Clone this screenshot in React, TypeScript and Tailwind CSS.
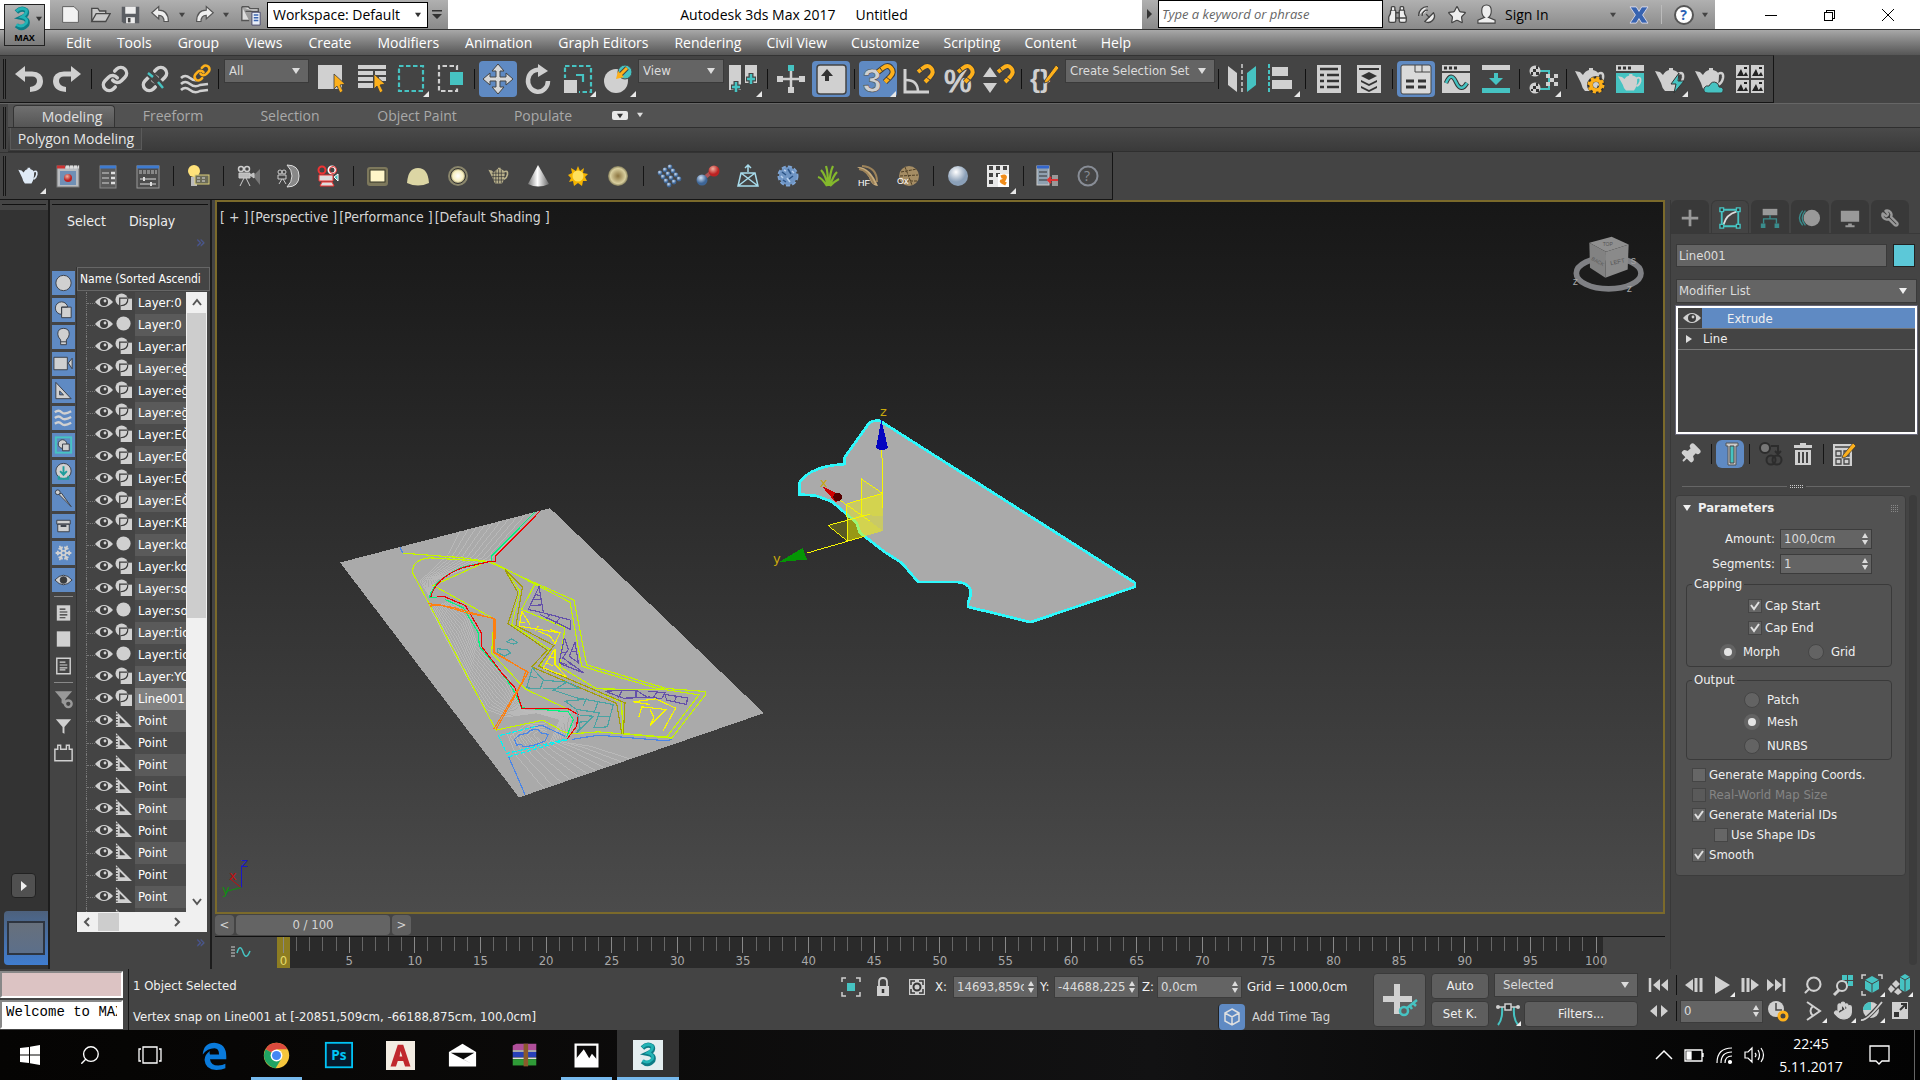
import type { ReactNode } from "react"
import { Link, Search, Star, Hand, Wrench, Snowflake, Pin, Binoculars, SatelliteDish } from "lucide-react"

const L = "#d0d0d0"
const T = "#46c3c2"
const O = "#fdb01b"
const D = "#444444"

/* ---------- shared bits ---------- */

interface ToolProps {
  label: string
  active?: boolean
  flyout?: boolean
  children: ReactNode
}

const Tool = ({ label, active, flyout, children }: ToolProps) => (
  <button aria-label={label} className="flex h-9 w-10 shrink-0 items-center justify-center">
    <svg viewBox="0 0 40 36" className="h-9 w-10 overflow-visible" fill="none">
      {active && <rect x="1" y="0" width="38" height="36" rx="4" fill="#5f8ac3" />}
      {children}
      {flyout && <path d="M38 30V36H32Z" fill="#e8e8e8" />}
    </svg>
  </button>
)

const Sep = () => (
  <div className="flex h-[26px] w-[7px] shrink-0 items-center justify-center">
    <div className="h-5 w-px bg-[#111]" />
  </div>
)

const WideSep = () => (
  <div className="flex h-[26px] w-[10px] shrink-0 items-center justify-center">
    <div className="h-5 w-px bg-[#151515]" />
  </div>
)

const Grip = () => (
  <div className="flex w-2 shrink-0 justify-center gap-px self-stretch py-[3px]">
    <div className="w-px bg-[#151515]" />
    <div className="w-px bg-[#151515]" />
  </div>
)

const Arrow = ({ className = "" }: { className?: string }) => (
  <svg viewBox="0 0 8 6" className={`pointer-events-none h-[6px] w-2 ${className}`}>
    <path d="M0 0H8L4 6Z" fill="currentColor" />
  </svg>
)

const Dropdown = ({ label, value, className = "" }: { label: string; value: string; className?: string }) => (
  <label className={`relative flex items-center border border-[#3a3a3a] bg-[#646464] text-[#dcdcdc] ${className}`}>
    <select aria-label={label} className="h-full w-full appearance-none bg-transparent pl-1 outline-none">
      <option>{value}</option>
    </select>
    <Arrow className="absolute right-2" />
  </label>
)

const Spin = ({ label, value, className = "" }: { label: string; value: string; className?: string }) => (
  <div className={`flex items-center border border-[#3c3c3c] bg-[#646464] pr-[3px] ${className}`}>
    <input aria-label={label} defaultValue={value} className="w-full min-w-0 flex-1 bg-transparent pl-[3px] text-[#dcdcdc] outline-none" />
    <svg viewBox="0 0 6 12" className="ml-1 h-3 w-[6px] shrink-0" fill="#dcdcdc">
      <path d="M3 0L6 5H0ZM3 12L6 7H0Z" />
    </svg>
  </div>
)

const EyeShape = () => (
  <svg viewBox="0 0 18 12" className="h-3 w-[18px] shrink-0">
    <path d="M0 6Q9 -4 18 6Q9 16 0 6Z" fill={L} />
    <circle cx="9" cy="6" r="4" fill="#3c3c3c" />
    <circle cx="10" cy="5" r="1.4" fill={L} />
  </svg>
)

const Hook = () => (
  <g strokeWidth="4">
    <path d="M20 11L25 7Q30 3 33 7Q37 11 32 16L27 21" stroke="#3d3d3d" strokeWidth="6" />
    <path d="M20 11L25 7Q30 3 33 7Q37 11 32 16L27 21" stroke={O} />
    <path d="M22 7L25 11M28 16L32 19" stroke="#3d3d3d" strokeWidth="1" />
  </g>
)

const Cursor = () => <path d="M23 13L34 23L29 24L32 30L29 32L26 25L23 28Z" fill={O} stroke="#3d3d3d" strokeWidth="0.8" />

const Teapot = ({ fill = L }: { fill?: string }) => (
  <g>
    <path d="M5 10L10 11L13 14Q15 10 19 9V7H23V9Q28 10 29 14Q29 25 25 30H15Q12 27 11 22Z" fill={fill} />
    <path d="M28 13Q34 10 33 17Q32 22 28 24" stroke={fill} strokeWidth="2.5" />
  </g>
)

/* ---------- title bar ---------- */

const ThreeLogo = ({ className }: { className: string }) => (
  <svg viewBox="0 0 40 40" className={className} fill="none">
    <path d="M12 10Q19 3 26 8Q29 14 20 18Q30 20 27 28Q20 36 12 29" stroke="#0e7c86" strokeWidth="7" />
    <path d="M12 9Q19 2 26 7Q28 12 20 17Q29 19 26 26Q20 33 12 28" stroke="#22b3b5" strokeWidth="4" />
  </svg>
)

const quick = [
  <path key="n" d="M3 3H16L21 8V21H3Z" fill="#f2f2f2" stroke="#555" />,
  <path key="o" d="M2 20V5H9L11 8H18V11M2 20L7 11H23L18 20Z" fill="#c9c9c9" stroke="#484848" strokeWidth="1.5" />,
  <g key="s"><path d="M2 3H22V22H4L2 20Z" fill="#5b5e63" /><path d="M6 3H18V11H6ZM7 15H17V22H7Z" fill="#eee" /><path d="M9 16H12V21H9Z" fill="#444" /></g>,
  <path key="u" d="M2 10L10 3V7Q21 7 21 20H16Q16 13 10 13V17Z" fill="#eee" stroke="#555" strokeWidth="1.3" />,
]

const TitleBar = () => (
  <div className="flex h-[29px] bg-white text-[14px] text-black">
    <div className="ml-[50px] flex w-[398px] items-center bg-linear-to-b from-[#b0b0b0] to-[#8a8a8a] pl-[5px]">
      {["New", "Open", "Save", "Undo"].map((name, i) => (
        <button key={name} aria-label={name} className="flex w-[30px] justify-center">
          <svg viewBox="0 0 24 24" className="size-[21px]" fill="none">{quick[i]}</svg>
        </button>
      ))}
      <Arrow className="ml-1 h-1 w-[6px] text-[#444]" />
      <button aria-label="Redo" className="ml-1 flex w-[30px] justify-center">
        <svg viewBox="0 0 24 24" className="size-[21px] -scale-x-100" fill="none">{quick[3]}</svg>
      </button>
      <Arrow className="ml-1 h-1 w-[6px] text-[#444]" />
      <button aria-label="Project folder" className="ml-[10px] flex w-6 justify-center">
        <svg viewBox="0 0 24 24" className="size-[22px]" fill="none">
          <path d="M2 3H9L11 5H20V10M2 3V18H10M6 8H20" stroke="#555" strokeWidth="1.5" fill="#ddd" />
          <path d="M13 9H22V23H13Z" fill="#e8eef8" stroke="#446" />
          <path d="M15 12H20M15 15H20M15 18H20" stroke="#3b65b0" strokeWidth="1.5" />
        </svg>
      </button>
      <label className="relative ml-1 flex h-[26px] w-[161px] items-center border border-black bg-white">
        <select aria-label="Workspace" className="w-full appearance-none pl-[5px] outline-none">
          <option>Workspace: Default</option>
        </select>
        <Arrow className="absolute right-[6px] h-1 w-[6px] text-[#333]" />
      </label>
      <svg viewBox="0 0 10 10" className="ml-1 size-[10px]" fill="#333"><path d="M0 0H10V1.5H0ZM0 4H10L5 9Z" /></svg>
    </div>
    <div className="flex flex-1 items-center justify-center gap-5 pr-[2px] whitespace-nowrap">
      <span>Autodesk 3ds Max 2017</span>
      <span>Untitled</span>
    </div>
    <div className="flex w-[573px] items-center bg-linear-to-b from-[#b0b0b0] to-[#8a8a8a]">
      <svg viewBox="0 0 16 29" className="h-[29px] w-4"><path d="M5 9L10 14L5 19Z" fill="#333" /></svg>
      <input aria-label="Search" placeholder="Type a keyword or phrase" className="h-[28px] w-[225px] self-start border border-black bg-white px-[3px] text-[13px] italic outline-none placeholder:text-[#666]" />
      <button aria-label="Find" className="flex w-[29px] justify-center"><Binoculars size={21} fill="#eee" color="#444" strokeWidth={1.5} /></button>
      <button aria-label="Communication center" className="flex w-[29px] justify-center"><SatelliteDish size={21} fill="#eee" color="#444" strokeWidth={1.5} className="-scale-x-100" /></button>
      <button aria-label="Favorites" className="flex w-[31px] justify-center"><Star size={20} fill="#eee" color="#444" strokeWidth={1.5} /></button>
      <button className="flex items-center gap-2 pl-1">
        <svg viewBox="0 0 22 22" className="size-[21px]" fill="#eee" stroke="#444" strokeWidth="1.2">
          <path d="M6 7Q6 1 11 1Q16 1 16 7Q16 12 13 14L20 17V20H2V17L9 14Q6 12 6 7Z" />
        </svg>
        Sign In
      </button>
      <Arrow className="ml-[61px] h-1 w-[6px] text-[#444]" />
      <button aria-label="Exchange" className="ml-[13px] flex w-5 justify-center">
        <svg viewBox="0 0 22 20" className="h-[18px] w-5"><path d="M1 1H8L11 6L14 1H21L15 10L21 19H14L11 14L8 19H1L7 10Z" fill="#3763b0" stroke="#dde" /></svg>
      </button>
      <div className="mx-3 h-[19px] w-px bg-[#bbb]" />
      <button aria-label="Help" className="flex size-[20px] items-center justify-center rounded-full border-2 border-[#555] bg-white text-[14px] font-bold text-[#2b62b5]">?</button>
      <Arrow className="ml-2 h-1 w-[6px] text-[#444]" />
    </div>
    <div className="flex w-[205px] items-center pl-[26px]">
      <button aria-label="Minimize" className="flex w-[59px] justify-center"><svg viewBox="0 0 12 12" className="size-3"><path d="M0 6.500H12" stroke="#000" /></svg></button>
      <button aria-label="Restore" className="flex w-[58px] justify-center">
        <svg viewBox="0 0 12 12" className="size-3" fill="none" stroke="#000" shapeRendering="crispEdges"><path d="M1 3H9V11H1ZM3 3V1H11V9H9" /></svg>
      </button>
      <button aria-label="Close" className="flex w-[59px] justify-center"><svg viewBox="0 0 12 12" className="size-3" stroke="#000"><path d="M0 0L12 12M12 0L0 12" /></svg></button>
    </div>
  </div>
)

const menus = ["Edit", "Tools", "Group", "Views", "Create", "Modifiers", "Animation", "Graph Editors", "Rendering"]
const moreMenus = ["Civil View", "Customize", "Scripting", "Content", "Help"]

const MenuBar = () => (
  <nav className="flex h-[26px] items-center border-t border-[#333] bg-linear-to-b from-[#a8a8a8] to-[#565656] pl-[53px] text-[14px] whitespace-nowrap text-white">
    {menus.map((m) => <button key={m} className="px-[13px]">{m}</button>)}
    {moreMenus.map((m) => <button key={m} className="px-3">{m}</button>)}
  </nav>
)

/* ---------- main toolbar ---------- */

const UndoArrow = () => <path d="M7 13L17 5V10.500H24Q35 11 35 20Q35 30 22 31V26Q29 25 29 20Q29 15.500 24 15.500H17V21Z" fill={L} />

const MainToolbar = () => (
  <div className="flex">
    <div className="flex h-12 items-center border-t border-r border-b border-[#151515] border-t-[#333] pr-[3px]">
      <Grip />
      <Tool label="Undo"><UndoArrow /></Tool>
      <Tool label="Redo"><g transform="translate(40 0) scale(-1 1)"><UndoArrow /></g></Tool>
      <Sep />
      <Tool label="Select and Link"><Link x={6} y={4} width={28} height={28} color={L} strokeWidth={3} /></Tool>
      <Tool label="Unlink Selection">
        <Link x={6} y={4} width={28} height={28} color={L} strokeWidth={3} />
        <path d="M12 10L28 26" stroke={D} strokeWidth="7" />
        <path d="M13 12L18 16M23 21L28 27" stroke={T} strokeWidth="2.500" />
      </Tool>
      <Tool label="Bind to Space Warp">
        <g stroke={L} strokeWidth="2.500">
          <path d="M6 17Q10 13 15 17T25 18L33 18" /><path d="M6 23Q10 19 15 23T25 24L33 23" /><path d="M6 29Q10 25 15 29T25 30L33 29" />
        </g>
        <rect x="20" y="3" width="15" height="17" fill={D} />
        <Link x={18} y={3} width={18} height={18} color={O} strokeWidth={3.5} />
      </Tool>
      <Sep />
      <Dropdown label="Selection Filter" value="All" className="mr-[2px] mb-[17px] ml-[2px] h-[24px] w-[85px]" />
      <Tool label="Select Object"><rect x="7" y="4" width="24" height="24" fill={L} /><Cursor /></Tool>
      <Tool label="Select by Name"><path d="M7 4H35V8H7ZM7 10H22V14H7ZM24 10H35V14H24ZM7 16H22V20H7ZM28 16H35V20H28ZM7 22H22V27H7Z" fill={L} /><Cursor /></Tool>
      <Tool label="Rectangular Selection Region" flyout><rect x="8" y="5" width="24" height="25" stroke={T} strokeWidth="2.200" strokeDasharray="4.500 2.500" /></Tool>
      <Tool label="Window Crossing">
        <path d="M26 9V5H8V30H26V25" stroke={L} strokeWidth="2.200" strokeDasharray="4.500 2.500" />
        <rect x="19" y="11" width="13" height="13" fill={T} />
      </Tool>
      <Sep />
      <Tool label="Select and Move" active>
        <path d="M20 3L26 10H22V16H28V12L35 18L28 24V20H22V26H26L20 33L14 26H18V20H12V24L5 18L12 12V16H18V10H14Z" fill="#d8d8d8" stroke="#444" strokeWidth="1" />
      </Tool>
      <Tool label="Select and Rotate"><path d="M22 9A10 11 0 1 0 30 20" stroke={L} strokeWidth="4.500" /><path d="M20 3L30 10L20 16Z" fill={L} /></Tool>
      <Tool label="Select and Uniform Scale" flyout>
        <rect x="7" y="5" width="26" height="26" stroke={T} strokeWidth="2.200" strokeDasharray="4.500 2.500" />
        <rect x="5" y="17" width="16" height="16" fill={D} /><rect x="6" y="19" width="13" height="13" fill={L} />
        <path d="M18 14H25V21" stroke={T} strokeWidth="2.200" />
      </Tool>
      <Tool label="Select and Place" flyout>
        <ellipse cx="18" cy="20" rx="12" ry="12" fill={L} /><circle cx="27" cy="11" r="7" fill={T} stroke={D} />
        <path d="M29 7L22 14" stroke={D} strokeWidth="5" /><path d="M29 7L22 14" stroke={O} strokeWidth="3" /><path d="M18 18L20 10L26 16Z" fill={O} />
      </Tool>
      <Dropdown label="Reference Coordinate System" value="View" className="mb-[17px] h-[24px] w-[86px]" />
      <Tool label="Use Pivot Point Center" flyout>
        <path d="M5 4H17V29H5ZM21 4H33V22H21Z" fill={L} />
        <path d="M12 20V32M7 26H17M27 12V24M22 18H32" stroke={D} strokeWidth="5" />
        <path d="M12 21V31M8 26H16M27 13V23M23 18H31" stroke={T} strokeWidth="2.500" />
      </Tool>
      <Sep />
      <Tool label="Select and Manipulate">
        <path d="M20 10V27M9 18H31" stroke={L} strokeWidth="2.500" />
        <path d="M6 15H12V21H6ZM28 15H34V21H28ZM17 26H23V32H17Z" fill={L} /><path d="M17 4H23V10H17Z" fill={T} />
      </Tool>
      <Tool label="Keyboard Shortcut Override" active>
        <rect x="6" y="4" width="29" height="29" rx="3" fill={L} stroke="#444" strokeWidth="1.500" /><path d="M16 8L22 15H18V20H14V15H10Z" fill="#333" />
      </Tool>
      <Sep />
      <Tool label="Snaps Toggle" active flyout>
        <text x="5" y="31" fontSize="33" fontWeight="bold" fill={L} stroke="#444" strokeWidth="0.500" fontFamily="Liberation Sans">3</text><Hook />
      </Tool>
      <Tool label="Angle Snap"><path d="M7 8V31H31" stroke={L} strokeWidth="3" /><path d="M8 19Q20 19 20 31" stroke={L} strokeWidth="2.500" /><Hook /></Tool>
      <Tool label="Percent Snap"><text x="6" y="31" fontSize="31" fill={L} stroke={L} fontFamily="Liberation Sans">%</text><Hook /></Tool>
      <Tool label="Spinner Snap"><path d="M12 6L19 16H5ZM12 32L19 22H5Z" fill={L} /><Hook /></Tool>
      <Sep />
      <Tool label="Edit Named Selection Sets">
        <text x="5" y="27" fontSize="26" fontWeight="bold" fill={L} fontFamily="Liberation Sans">{"{}"}</text>
        <path d="M20 19L31 4L34 7L23 21L19 22Z" fill={O} stroke="#333" strokeWidth="0.800" />
      </Tool>
      <Dropdown label="Named Selection Sets" value="Create Selection Set" className="mb-[17px] h-[24px] w-[150px]" />
      <Sep />
      <Tool label="Mirror"><path d="M6 5L15 12V31L6 24Z" fill={L} /><path d="M34 5L25 12V31L34 24Z" fill={T} /><path d="M20 3V33" stroke={L} strokeWidth="1.500" strokeDasharray="4 2" /></Tool>
      <Tool label="Align" flyout><path d="M7 3V33" stroke={T} strokeWidth="2" strokeDasharray="4 2" /><path d="M10 6H26V15H10ZM10 19H30V28H10Z" fill={L} /></Tool>
      <Sep />
      <Tool label="Toggle Scene Explorer"><path d="M8 4H32V32H8Z" fill={L} /><path d="M11 8H29M11 14H15M18 14H30M11 20H15M18 20H30M11 26H15M18 26H30" stroke="#333" strokeWidth="2.500" /></Tool>
      <Tool label="Toggle Layer Explorer"><path d="M8 4H32V32H8Z" fill={L} /><path d="M10 8H30" stroke="#333" strokeWidth="2" /><path d="M20 11L28 15L20 19L12 15ZM12 19L20 23L28 19V21L20 25L12 21ZM12 25L20 29L28 25V27L20 31L12 27Z" fill="#333" /></Tool>
      <Sep />
      <Tool label="Toggle Ribbon" active>
        <rect x="5" y="4" width="30" height="29" rx="2" fill="#dadada" stroke="#444" />
        <path d="M19 4V11H34M26 4V11" stroke="#444" /><path d="M10 20H18M22 20H30M10 26H18M22 26H30" stroke="#333" strokeWidth="3" />
      </Tool>
      <Tool label="Curve Editor"><path d="M6 4H34V10H6ZM6 12H34V32H6Z" fill={L} /><path d="M8 7H11M13 7H16M18 7H21" stroke="#333" strokeWidth="3" /><path d="M10 22Q15 10 20 21T31 22" stroke="#333" strokeWidth="4.500" /><path d="M10 22Q15 10 20 21T31 22" stroke={T} strokeWidth="2.500" /></Tool>
      <Tool label="Schematic View"><path d="M6 4H34V9H6Z" fill={L} /><path d="M6 27H34V32H6ZM18 12H22V17H27L20 24L13 17H18Z" fill={T} /></Tool>
      <Sep />
      <Tool label="Material Editor" flyout>
        <path d="M17 10H26V28H17M26 18H30" stroke={T} strokeWidth="2" />
        <circle cx="12" cy="10" r="5.500" fill={L} /><circle cx="12" cy="27" r="5.500" fill={L} />
        <path d="M10 8H13V11H10ZM13 11H16V14H13ZM8 11H10V14H8ZM13 5H15V8H13ZM10 25H13V28H10ZM13 28H16V31H13ZM8 28H10V30H8ZM13 22H15V25H13Z" fill="#333" />
        <path d="M23 13H27V17H31V13H35V17H31V21H35V25H31V21H27V25H23V21H27V17H23Z" fill={L} />
      </Tool>
      <Sep />
      <Tool label="Render Setup"><Teapot /><circle cx="26" cy="24" r="6" stroke="#333" strokeWidth="6" /><circle cx="26" cy="24" r="7" stroke={O} strokeWidth="3" strokeDasharray="3 2.500" /><circle cx="26" cy="24" r="5" stroke={O} strokeWidth="3.500" /></Tool>
      <Tool label="Rendered Frame Window">
        <path d="M6 4H34V10H6Z" fill={L} /><path d="M6 12H34V32H6Z" fill={T} /><path d="M8 7H11M13 7H16M18 7H21" stroke="#333" strokeWidth="3" />
        <g transform="translate(4 8) scale(0.800 0.720)"><Teapot /></g>
      </Tool>
      <Tool label="Render Production" flyout><Teapot /><path d="M29 12L21 23H26L24 32L34 20H28Z" fill={T} stroke="#333" /></Tool>
      <Tool label="Render in Cloud"><Teapot /><path d="M18 32Q13 32 14 27Q16 24 19 25Q22 19 27 22Q29 24 29 26Q34 26 33 30Q33 32 31 32Z" fill={T} stroke="#3a3a3a" /></Tool>
      <Tool label="Autodesk A360 Gallery">
        <path d="M6 4H19V17H6ZM21 4H34V17H21ZM6 19H19V32H6ZM21 19H34V32H21Z" fill={L} />
        <path d="M7 15L11 8L14 15ZM22 15L26 8L29 15ZM7 30L11 23L14 30ZM22 30L26 23L29 30ZM13 15L16 11L18 15ZM28 15L31 11L33 15ZM13 30L16 26L18 30ZM28 30L31 26L33 30Z" fill="#222" />
        <path d="M14 7H17M29 7H32M14 22H17M29 22H32" stroke="#222" strokeWidth="2" />
      </Tool>
    </div>
  </div>
)

/* ---------- ribbon ---------- */

const Ribbon = () => (
  <div className="flex border-t border-[#666] bg-[#444]">
    <Grip />
    <div className="min-w-0 flex-1">
      <div className="flex h-6 items-end border-b border-[#2f2f2f] bg-[#525252] pl-[5px] text-[14px] whitespace-nowrap text-[#a9a9a9]">
        <button className="h-[22px] w-[102px] rounded-t-sm border border-b-0 border-[#333] bg-linear-to-b from-[#707070] to-[#555] pl-4 leading-[20px] text-[#e0e0e0]">Modeling</button>
        <button className="h-[22px] w-[116px] leading-[20px]">Freeform</button>
        <button className="h-[22px] w-[118px] leading-[20px]">Selection</button>
        <button className="h-[22px] w-[136px] leading-[20px]">Object Paint</button>
        <button className="h-[22px] w-[116px] leading-[20px]">Populate</button>
        <button aria-label="Ribbon display" className="mb-[7px] ml-[11px] flex h-[9px] w-4 items-center justify-center rounded-xs bg-[#e8e8e8]"><Arrow className="h-1 w-[6px] text-[#333]" /></button>
        <Arrow className="mb-[9px] ml-[9px] h-[3px] w-[6px] text-[#ddd]" />
      </div>
      <div className="flex h-6 border-b border-[#2f2f2f] bg-linear-to-b from-[#4a4a4a] to-[#3a3a3a] pl-[2px] text-[14px]">
        <button className="h-[22px] w-[132px] border border-t-0 border-[#5a5a5a] bg-[#484848] leading-[22px] text-[#e6e6e6]">Polygon Modeling</button>
      </div>
    </div>
  </div>
)

/* ---------- render shortcuts ---------- */

const ShortcutBar = () => (
  <div className="flex">
    <svg width="0" height="0" className="absolute">
      <defs>
        <radialGradient id="warm"><stop offset="0" stopColor="#fff" /><stop offset="0.7" stopColor="#f7efc0" /><stop offset="1" stopColor="#8d865d" /></radialGradient>
        <radialGradient id="tan"><stop offset="0" stopColor="#8c7540" /><stop offset="0.75" stopColor="#d9cf9e" /><stop offset="1" stopColor="#807a58" /></radialGradient>
        <radialGradient id="ice" cx="0.4" cy="0.3"><stop offset="0" stopColor="#fff" /><stop offset="1" stopColor="#8ba0b8" /></radialGradient>
        <radialGradient id="blue" cx="0.4" cy="0.3"><stop offset="0" stopColor="#cfe0f4" /><stop offset="1" stopColor="#3d6596" /></radialGradient>
        <radialGradient id="red" cx="0.4" cy="0.3"><stop offset="0" stopColor="#f0b0a0" /><stop offset="1" stopColor="#b22" /></radialGradient>
        <linearGradient id="cone"><stop offset="0" stopColor="#777" /><stop offset="0.45" stopColor="#fff" /><stop offset="1" stopColor="#666" /></linearGradient>
      </defs>
    </svg>
    <div className="flex h-12 items-center border-t border-r border-b border-[#151515] border-t-[#333] pr-[4px]">
      <Grip />
      <Tool label="Render" flyout><g transform="translate(7 5) scale(0.660 0.680)"><Teapot fill="#dfeaf6" /></g></Tool>
      <Tool label="Frame window"><rect x="9" y="8" width="22" height="21" fill="#b9bcc0" stroke="#777" /><path d="M9 9H17" stroke="#c33" strokeWidth="3" /><path d="M18 9H31" stroke="#ddd" strokeWidth="3" strokeDasharray="3 1" /><rect x="12" y="13" width="16" height="14" fill="#6f8fb5" /><circle cx="20" cy="20" r="4" fill="url(#red)" /></Tool>
      <Tool label="Settings"><rect x="12" y="8" width="16" height="22" fill="#5a5a5a" stroke="#888" /><path d="M12 9H28" stroke="#3e7bd0" strokeWidth="3" /><path d="M14 15H21M14 20H21M14 25H21" stroke="#aaa" strokeWidth="1.500" /><path d="M23 15H27M23 20H27M23 25H27" stroke="#ddd" strokeWidth="2.500" /></Tool>
      <Tool label="Exposure"><rect x="9" y="8" width="22" height="22" fill="#4d4d4d" stroke="#999" /><path d="M9 9H31" stroke="#3e7bd0" strokeWidth="3" /><path d="M11 14H29" stroke="#888" strokeWidth="4" strokeDasharray="3 1" /><path d="M12 21H28M12 26H28" stroke="#ddd" /><path d="M16 19V23M23 24V28" stroke="#ddd" strokeWidth="2" /></Tool>
      <WideSep />
      <Tool label="Light lister"><circle cx="16" cy="13" r="6" fill="#ffe27a" /><path d="M13 19H19V28H13Z" fill="#bbb" /><rect x="17" y="17" width="14" height="9" fill="#6b6b58" stroke="#ddd07a" /><path d="M19 20H29M19 23H29" stroke="#ddd" strokeDasharray="3 2" /></Tool>
      <WideSep />
      <Tool label="Physical camera"><path d="M25 18L32 11V27Z" fill="#777" /><circle cx="13" cy="11" r="2.500" stroke="#ccc" strokeWidth="1.500" /><circle cx="19" cy="11" r="2.500" stroke="#ccc" strokeWidth="1.500" /><path d="M11 15H22V20H11ZM22 17L26 15V20ZM16 20L12 28M18 20L22 28" fill="#bbb" stroke="#ccc" /></Tool>
      <Tool label="Dome camera"><path d="M19 7Q31 7 31 18Q31 29 19 29Q24 24 24 18Q24 12 19 7Z" fill="#888" stroke="#ddd" /><circle cx="12" cy="14" r="2" stroke="#ccc" /><circle cx="16" cy="14" r="2" stroke="#ccc" /><path d="M10 17H18V21H10ZM14 21L11 26M15 21L18 26" stroke="#ccc" /></Tool>
      <Tool label="Stereo camera"><circle cx="14" cy="12" r="3.500" stroke="#e33" strokeWidth="2" /><circle cx="24" cy="12" r="3.500" stroke="#fff" strokeWidth="2" /><circle cx="25" cy="12" r="3.500" stroke="#e33" /><path d="M11 17H25V23H11ZM14 24H24L26 28H12Z" fill="#ddd" stroke="#e33" /><path d="M26 19L30 16V23Z" fill="#4bb" stroke="#fff" /></Tool>
      <WideSep />
      <Tool label="Plane light"><rect x="9" y="9" width="21" height="19" rx="3" fill="#7d785c" /><rect x="12" y="12" width="15" height="12" fill="#fff6c9" stroke="#332" /></Tool>
      <Tool label="Dome light"><path d="M9 25Q10 10 20 10Q30 10 31 25Q20 30 9 25Z" fill="#dcd6a4" /></Tool>
      <Tool label="Sphere light"><circle cx="20" cy="18" r="10" fill="#8a866c" /><circle cx="20" cy="18" r="7.500" fill="url(#warm)" stroke="#333" /></Tool>
      <Tool label="Mesh light"><g transform="translate(7 5) scale(0.680 0.680)"><Teapot fill="#b9b18c" /><path d="M12 14V28M16 10V30M20 9V30M24 10V30M10 15H30M10 20H30M12 25H28" stroke="#333" /></g></Tool>
      <Tool label="Cone light"><path d="M20 7L31 26Q20 31 10 26Z" fill="url(#cone)" /></Tool>
      <Tool label="Sun"><path d="M20 8L22 13L26 10L25 15L30 16L27 19L29 23L25 23L24 28L20 25L16 28L15 23L11 24L13 20L10 17L14 15L13 10L18 13Z" fill="#f5b400" /><circle cx="20" cy="18" r="5.500" fill="#ffe05a" /></Tool>
      <Tool label="Ambient light"><circle cx="20" cy="18" r="10" fill="url(#tan)" /></Tool>
      <WideSep />
      <Tool label="Instancer">
        {[0, 1, 2, 3].map((r) => [0, 1, 2].map((c) => <circle key={`${r}${c}`} cx={12 + c * 5 + r * 3} cy={15 - c * 3 + r * 4} r="2.400" fill="url(#blue)" />))}
      </Tool>
      <Tool label="Metaball"><path d="M15 21L26 12" stroke="#a55" strokeWidth="4" /><circle cx="14" cy="22" r="5.500" fill="url(#blue)" /><circle cx="26" cy="13" r="5.500" fill="url(#red)" /></Tool>
      <Tool label="Proxy"><path d="M20 7V14M17 10L20 7L23 10M13 15H27L30 28H10ZM13 15L30 28M27 15L10 28" stroke="#a8dcec" strokeWidth="1.500" /></Tool>
      <Tool label="Displacement"><circle cx="20" cy="18" r="9" stroke="#7fa6d6" strokeWidth="3" strokeDasharray="4 2" /><circle cx="20" cy="18" r="9" fill="#6f95c4" /><path d="M14 14L18 17M20 11L23 16M25 18L21 21M15 22L18 24" stroke="#2c5486" strokeWidth="1.500" /><path d="M16 12L18 13M24 13L26 15M19 20L22 24M13 18L15 20" stroke="#b8d0ee" strokeWidth="1.500" /></Tool>
      <Tool label="Grass"><path d="M20 28Q17 16 13 12M20 28Q20 14 18 8M21 28Q22 14 25 8M22 28Q25 18 29 14M19 28Q14 20 10 19M22 28Q27 23 31 21" stroke="#84b92c" strokeWidth="2.200" /></Tool>
      <Tool label="Hair">
        <path d="M9 9Q22 8 30 28Q26 28 23 24Q20 14 9 9Z" fill="#c8ac7c" /><path d="M14 8Q29 9 29 24M11 11Q20 12 26 26" stroke="#9d835a" strokeWidth="2" />
        <text x="10" y="28" fontSize="9" fill="#fff" fontFamily="Liberation Sans">HF</text>
      </Tool>
      <Tool label="Ornatrix">
        <circle cx="21" cy="18" r="10" fill="#a58d64" /><path d="M13 14L29 11M12 18L30 17M14 23L29 23M17 9L24 27" stroke="#4f3f25" strokeDasharray="3 1" />
        <text x="9" y="26" fontSize="9" fill="#fff" fontFamily="Liberation Sans">Ox</text>
      </Tool>
      <WideSep />
      <Tool label="Material"><circle cx="20" cy="18" r="10" fill="url(#ice)" /></Tool>
      <Tool label="Material library" flyout>
        <rect x="9" y="7" width="22" height="22" fill="#e8e8e8" />
        <path d="M11 10H15M18 10H22M25 10H29M11 17H15M18 17H22M11 24H15" stroke="#444" strokeWidth="4" />
        <rect x="20" y="16" width="11" height="13" fill="#fff" /><path d="M23 19Q28 17 27 20T24 23T28 26" stroke="#f08c1a" strokeWidth="3.500" />
      </Tool>
      <WideSep />
      <Tool label="Convert scene"><rect x="9" y="8" width="12" height="19" fill="#8fa0b0" stroke="#ccc" /><path d="M9 9H21" stroke="#36c" strokeWidth="3" /><path d="M11 14H19M11 18H19M11 22H19" stroke="#333" /><rect x="24" y="17" width="6" height="11" fill="#999" /><path d="M30 22H20M23 19L20 22L23 25" stroke="#d33" strokeWidth="2" /></Tool>
      <Tool label="About"><circle cx="20" cy="18" r="9.500" stroke="#888d96" strokeWidth="2" /><text x="16" y="23" fontSize="14" fill="#888d96" fontFamily="Open Sans">?</text></Tool>
    </div>
  </div>
)

/* ---------- scene explorer ---------- */

const shapeIcon = (
  <svg viewBox="0 0 18 18" className="size-[17px] shrink-0"><circle cx="7" cy="7" r="6.500" fill={L} /><rect x="6" y="6" width="12" height="12" fill={L} /><path d="M5 13.500V5.500H13M13.500 6Q14 13 6 13.500" stroke="#3c3c3c" strokeWidth="1.300" fill="none" /></svg>
)
const ballIcon = <svg viewBox="0 0 18 18" className="size-[17px] shrink-0"><circle cx="9" cy="9" r="7.500" fill={L} /></svg>
const pointIcon = (
  <svg viewBox="0 0 18 18" className="size-[17px] shrink-0"><path d="M1 0L18 17H1ZM5 7V13H11Z" fill={L} fillRule="evenodd" /><path d="M1 3H3M1 6H3M1 9H3M1 12H3M1 15H3" stroke="#333" /></svg>
)

const nodes: [string, ReactNode][] = [
  ["Layer:0", shapeIcon], ["Layer:0", ballIcon], ["Layer:ar", shapeIcon], ["Layer:eğ", shapeIcon], ["Layer:eğ", shapeIcon],
  ["Layer:eğ", shapeIcon], ["Layer:EĞ", shapeIcon], ["Layer:EĞ", shapeIcon], ["Layer:EĞ", shapeIcon], ["Layer:EĞ", shapeIcon],
  ["Layer:KE", shapeIcon], ["Layer:ko", ballIcon], ["Layer:ko", shapeIcon], ["Layer:so", shapeIcon], ["Layer:so", ballIcon],
  ["Layer:tic", shapeIcon], ["Layer:tic", ballIcon], ["Layer:YO", shapeIcon], ["Line001", shapeIcon],
  ["Point", pointIcon], ["Point", pointIcon], ["Point", pointIcon], ["Point", pointIcon], ["Point", pointIcon],
  ["Point", pointIcon], ["Point", pointIcon], ["Point", pointIcon], ["Point", pointIcon], ["", pointIcon],
]

const filters: [string, ReactNode][] = [
  ["Geometry", <circle cx="12" cy="12" r="8" />],
  ["Shapes", <g><circle cx="10" cy="10" r="6.500" /><path d="M10 9H20V20H10Z" /><path d="M10 9V16M10 9H16" /></g>],
  ["Lights", <path d="M12 3Q18 3 18 9Q18 12 15 15V20H9V15Q6 12 6 9Q6 3 12 3ZM9 17H15" />],
  ["Cameras", <path d="M2 5H16V18H2ZM17 11L21 6V17Z" />],
  ["Helpers", <path d="M4 3L20 20H4ZM8 12V16H12Z" fillRule="evenodd" />],
  ["Space Warps", <g fill="none" stroke={L} strokeWidth="2.500"><path d="M3 6Q7 3 10 6T20 5" /><path d="M3 12Q7 9 10 12T20 11" /><path d="M3 18Q7 15 10 18T20 17" /></g>],
  ["Groups", <g><rect x="4" y="4" width="16" height="16" fill="none" stroke={T} strokeWidth="2" /><circle cx="11" cy="11" r="4.500" /><path d="M11 11H18V18H11Z" /></g>],
  ["XRefs", <g><circle cx="12" cy="11" r="8" /><path d="M12 6V14M8.500 11L12 15L15.500 11M7 16V19H17V16" fill="none" stroke="#1f9d9b" strokeWidth="2" /></g>],
  ["Bones", <g><path d="M7 7L10 6L20 20Z" /><circle cx="6" cy="5" r="2.500" /></g>],
  ["Containers", <g><path d="M5 6H19V10H5ZM6 10H18V18H6Z" /><path d="M9 12H15" strokeWidth="2" /></g>],
  ["Frozen", <Snowflake x={3} y={3} width={18} height={18} color={L} strokeWidth={2.5} />],
  ["Hidden", <g><path d="M3 12Q12 2 21 12Q12 22 3 12Z" /><circle cx="12" cy="12" r="3.500" fill="#3c3c3c" /></g>],
]

const ColumnButton = ({ label, children }: { label: string; children: ReactNode }) => (
  <button aria-label={label} className="flex h-6 w-[23px] items-center justify-center">
    <svg viewBox="0 0 24 24" className="size-6" fill="none">{children}</svg>
  </button>
)

const SceneExplorer = () => (
  <aside className="flex w-[164px] shrink-0 flex-col overflow-hidden border-r-2 border-l-2 border-[#1c1c1c] bg-[#444]">
    <div className="mx-[2px] mt-1 h-px shrink-0 bg-[#111]" />
    <div className="flex gap-[23px] pt-[5px] pl-[17px] text-[14px] leading-[22px] text-[#eee]">
      <button>Select</button>
      <button>Display</button>
    </div>
    <button className="h-5 shrink-0 self-end pr-[4px] text-[18px] leading-[12px] text-[#4a578f]">»</button>
    <div className="flex min-h-0 flex-1 pt-[15px]">
      <div className="flex w-[26px] shrink-0 flex-col items-center gap-[3px] pt-1">
        {filters.map(([label, icon]) => (
          <button key={label} aria-label={label} className="flex h-6 w-[23px] items-center justify-center bg-[#5f8ac3]">
            <svg viewBox="0 0 24 24" className="size-6" fill={L} stroke="#3a3f48" strokeWidth="1">{icon}</svg>
          </button>
        ))}
        <div className="mt-px h-px w-[19px] bg-[#888]" />
        <ColumnButton label="Select all"><path d="M5 5H19V21H5Z" fill={L} /><path d="M8 9H14M8 12H16M8 15H16M8 18H14" stroke="#333" strokeWidth="1.200" /></ColumnButton>
        <ColumnButton label="Select none"><path d="M5 4H19V20H5Z" fill={L} /></ColumnButton>
        <ColumnButton label="Invert"><path d="M5 4H19V20H5Z" stroke={L} strokeWidth="1.500" /><path d="M8 8H14M8 11H16M8 14H16M8 16H14" stroke={L} strokeWidth="1.200" /></ColumnButton>
        <div className="my-px h-px w-[19px] bg-[#888]" />
        <ColumnButton label="Advanced filter"><path d="M3 4H21L14 12V19L10 16V12Z" fill="#999" /><circle cx="17" cy="17" r="3.500" stroke="#999" strokeWidth="2.500" /></ColumnButton>
        <ColumnButton label="Filter"><path d="M4 5H20L13 13V20L11 19V13Z" fill={L} /></ColumnButton>
        <ColumnButton label="Sets"><path d="M3 8H6V4H9V8H15V4H18V8H21V20H3Z" stroke={L} strokeWidth="1.500" /></ColumnButton>
      </div>
      <div className="flex min-w-0 flex-1 flex-col border-l border-[#333]">
        <div className="mb-px h-[24px] shrink-0 overflow-hidden border border-[#666] bg-[#444] pl-[2px] text-[12px] leading-[22px] whitespace-nowrap text-white">Name (Sorted Ascendi</div>
        <div className="mr-[3px] flex min-h-0 flex-1">
          <ul className="min-w-0 flex-1 overflow-hidden">
            {nodes.map(([name, icon], i) => (
              <li key={i} className="flex h-[22px] items-center">
                <span className="ml-[9px] h-full w-[9px] border-l border-dotted border-[#777] pt-[11px]"><span className="block border-t border-dotted border-[#777]" /></span>
                <span className="flex items-center gap-[2px] pb-[3px]"><EyeShape />{icon}</span>
                <span className={`ml-[3px] h-full flex-1 overflow-hidden pl-[3px] leading-[22px] whitespace-nowrap text-white ${name === "Line001" ? "bg-[#808080]" : i % 2 ? "bg-[#5a5a5a]" : "bg-[#4b4b4b]"}`}>{name}</span>
              </li>
            ))}
          </ul>
          <div className="flex w-[21px] shrink-0 flex-col items-center bg-[#f0f0f0]">
            <svg viewBox="0 0 20 21" className="h-[21px] w-5"><path d="M6 13L10 8L14 13" stroke="#555" strokeWidth="2" fill="none" /></svg>
            <div className="h-[305px] w-[19px] bg-[#cdcdcd]" />
            <svg viewBox="0 0 20 21" className="mt-auto h-[21px] w-5"><path d="M6 8L10 13L14 8" stroke="#555" strokeWidth="2" fill="none" /></svg>
          </div>
        </div>
        <div className="mr-[3px] flex h-5 shrink-0 items-center bg-[#f0f0f0]">
          <svg viewBox="0 0 21 20" className="h-5 w-[21px]"><path d="M12 6L8 10L12 14" stroke="#555" strokeWidth="2" fill="none" /></svg>
          <div className="h-[18px] w-[21px] bg-[#cdcdcd]" />
          <svg viewBox="0 0 21 20" className="mr-[20px] ml-auto h-5 w-[21px]"><path d="M9 6L13 10L9 14" stroke="#555" strokeWidth="2" fill="none" /></svg>
        </div>
      </div>
    </div>
    <button className="h-[37px] shrink-0 self-end pr-[4px] pb-[18px] text-[18px] leading-[14px] text-[#4a578f]">»</button>
  </aside>
)

/* ---------- viewport ---------- */

type Pt = [number, number]

const contour = (a: Pt[], b: Pt[], count: number) =>
  Array.from({ length: count }, (_, k) => {
    const t = k / (count - 1)
    return a.map(([x, y], i) => `${x + (b[i][0] - x) * t},${y + (b[i][1] - y) * t}`).join(" ")
  })

const contours = [
  ...contour(
    [[330, 385], [395, 510], [450, 610], [500, 690], [560, 712], [650, 700], [720, 720], [690, 790]],
    [[385, 365], [440, 400], [470, 490], [570, 600], [590, 660], [615, 694], [750, 695], [765, 760]], 13),
  ...contour([[420, 155], [385, 225], [300, 305], [325, 345]], [[640, 100], [515, 238], [350, 300], [328, 350]], 10),
  ...contour([[560, 760], [590, 830], [670, 925]], [[745, 790], [810, 800], [930, 838]], 11),
  ...contour([[590, 800], [570, 770], [620, 735], [680, 730]], [[660, 790], [640, 765], [660, 750], [680, 760]], 5),
]

const Viewport = () => (
  <section className="relative min-h-0 flex-1 overflow-hidden border-2 border-[#7b6a2b] bg-linear-to-b from-[#171717] to-[#4b4b4b]">
    <svg viewBox="217 202 1446 711" preserveAspectRatio="xMidYMid slice" className="absolute inset-0 h-full w-full" fill="none">
      <g transform="translate(320 480) scale(0.33333)" strokeWidth="3.500" shapeRendering="crispEdges">
        <path d="M60 249L690 86L1332 701L597 954Z" fill="#aaaaaa" />
        <g stroke="#bcbcbc" strokeWidth="2.500">{contours.map((p, i) => <polyline key={i} points={p} />)}</g>
        <path d="M248 221L420 234L505 246L600 290L762 362L800 556L1040 627L1157 636V645L1055 776L835 757L755 763Q730 760 705 742L668 722L528 752L278 280Q275 240 330 235L500 246L340 318L522 418L515 520L615 628L745 690" stroke="#c5f500" />
        <path d="M520 250L750 368L785 560L835 575L1010 626L1040 630M645 313L605 390L735 445L720 540V562L830 628L1040 631L1137 646L1040 773L908 762M555 270L600 335L575 435L690 510L660 560L905 668L908 760" stroke="#c5f500" />
        <path d="M555 270L607 323L588 438L702 498L655 560L915 670L910 764M557 275L594 340L564 432L682 512L635 562L890 672L905 762" stroke="#a39d0a" />
        <path d="M645 97L515 230V245L430 262Q340 300 328 355H350M375 360L430 385L475 460L478 500L560 600L585 640L605 685L690 692L745 697L760 720L740 772" stroke="#00f57e" />
        <path d="M661 94L526 230V246L505 247L430 264Q345 295 332 354M350 352H375L436 378L484 460V500L545 580L585 625L606 686L690 687L745 688L774 705L770 740L742 778" stroke="#f00000" />
        <path d="M325 372L400 384L522 418V520L625 578L528 750M330 380L360 376L440 400L520 416M526 420L524 518L618 575L605 610L522 748" stroke="#ff7f0e" />
        <path d="M240 203L248 220M566 832L615 945M755 780L835 767L1040 784L1055 780M585 778L600 765L620 762L632 752L655 750L662 760L685 765L675 785L640 798L610 802L604 794L590 797L583 778M630 745L665 737L735 770" stroke="#4a86e8" />
        <path d="M535 768L560 822L735 780M540 768L650 740M565 832L745 780" stroke="#00f5f5" strokeDasharray="14 5" />
        <g stroke="#6450aa">
          <path d="M657 322L625 390L670 400ZM645 345L662 348M640 360H665M632 378L668 376M670 400L752 422V450L660 405M690 405L680 418M720 415L705 432" />
          <path d="M733 475L718 548L740 555M735 480L745 510L725 540M765 488L748 530L775 550ZM755 515H772M740 520L725 518M720 552L790 580L750 550M730 535L760 560" />
          <path d="M855 635L948 632V655L910 656L855 635ZM948 632L985 655H950M985 635L1035 640L1025 658L985 652M1035 645L1102 655L1100 675L1040 662ZM1070 650L1062 668M905 636L895 654M1010 638L1000 655" />
        </g>
        <g stroke="#f7f700">
          <path d="M605 395L598 440L720 460L705 492L690 470L655 455M605 395L630 435M615 430H600M655 440L645 455M690 450L720 460M704 508L670 565L740 592L705 555V508M690 535H704M680 550L700 560" />
          <path d="M940 667L1007 658L1067 686L1028 756M957 712L965 682L1038 690L990 738L1002 715L990 690M940 667L990 675" />
        </g>
        <g stroke="#4aa3a3">
          <path d="M560 487L575 478L593 490L580 494ZM533 508L560 510L572 520L553 530L533 518ZM637 565L620 625L660 628L670 602ZM628 590L650 595M670 602L740 608L780 628H670M740 608L700 632L770 655L880 675L862 742L822 745L838 700L770 690L735 665L790 660M770 690L780 745L770 760L820 710L780 708M800 655L790 678M835 665L822 700M780 728L800 725M838 710H868" />
        </g>
      </g>

      <g transform="translate(760 390) scale(0.33333)" shapeRendering="crispEdges">
        <path d="M360 94L1125 580V592L812 698L624 652V640L631 620V600Q625 582 595 578L475 578L425 520L375 488L300 430L290 400L218 338Q200 330 165 318L118 315V280Q150 230 253 224V205L328 100Q345 90 360 94Z" fill="#aaaaaa" stroke="#2ff8fb" strokeWidth="8" />
        <path d="M260 343L368 312V425L263 455Z" fill="#f7f700" fillOpacity="0.4" />
        <path d="M304 268L368 312V380L304 376ZM204 408L304 376L368 424L263 455Z" fill="#f7f700" fillOpacity="0.22" />
        <path d="M304 376V268L368 312L260 343L263 455L204 408L330 374M368 355V205M364 182V205M230 325L330 395M140 491L315 440" stroke="#f7f700" strokeWidth="3" />
        <path d="M364 90L348 176Q366 188 384 176Z" fill="#0404c0" />
        <path d="M185 290L245 318L228 340Z" fill="#d00000" /><circle cx="233" cy="323" r="13" fill="#500" />
        <path d="M57 518L128 475L141 510Z" fill="#049604" />
      </g>
      <g fontFamily="DejaVu Sans" fontSize="13">
        <text x="880" y="416" fill="#c9a90c">z</text>
        <text x="820" y="487" fill="#c9a90c">x</text>
        <text x="773" y="563" fill="#c9a90c">y</text>
        <text x="241" y="867" fill="#1818c8">z</text>
        <text x="229" y="880" fill="#c01010">x</text>
        <text x="222" y="894" fill="#109010">y</text>
      </g>
      <path d="M241.500 888V866" stroke="#1818c8" /><path d="M241 888L230 879" stroke="#c01010" /><path d="M241 888L226 892" stroke="#109010" />

      <g transform="translate(1560 195) scale(0.33333)">
        <ellipse cx="146" cy="236" rx="97" ry="47" fill="#1c1c1c" stroke="#7f8084" strokeWidth="17" />
        <path d="M88 145L155 127L206 150L138 172Z" fill="#8f8f8f" /><path d="M88 145L138 172L136 250L90 220Z" fill="#828282" /><path d="M138 172L206 150L203 225L136 250Z" fill="#8a8a8a" />
        <g fill="#555" fontSize="18" fontFamily="Liberation Sans">
          <text x="128" y="156" fontSize="15">TOP</text>
          <text x="93" y="196" fontSize="15" transform="rotate(28 93 196)">BACK</text>
          <text x="152" y="212" transform="rotate(-12 152 212)">LEFT</text>
        </g>
        <g fill="#a5a5a5" fontSize="32" fontFamily="Liberation Sans"><text x="38" y="272">z</text><text x="200" y="292">z</text><text x="212" y="210">s</text></g>
      </g>
    </svg>
    <div className="relative flex gap-[2px] pt-[5px] pl-[3px] text-[14px] text-[#d4d4d4]">
      <button>[ + ]</button><button>[Perspective ]</button><button>[Performance ]</button><button>[Default Shading ]</button>
    </div>
  </section>
)

const Timeline = () => (
  <div className="shrink-0">
    <div className="flex h-[23px] items-center gap-[2px] border-b border-[#111] text-[#d4d4d4]">
      <button aria-label="Previous frame" className="h-[20px] w-[19px] rounded-sm bg-[#606060]">&lt;</button>
      <button className="h-[20px] w-[154px] rounded-sm bg-[#646464]">0 / 100</button>
      <button aria-label="Next frame" className="h-[20px] w-[19px] rounded-sm bg-[#606060]">&gt;</button>
    </div>
    <div className="flex h-[32px] pr-[62px]">
      <button aria-label="Open Mini Curve Editor" className="flex w-[62px] shrink-0 pt-2 pl-4">
        <svg viewBox="0 0 20 14" className="h-[14px] w-5" fill="none"><path d="M0 2H4M0 5H4M0 8H4M0 11H4" stroke={L} /><path d="M6 8Q9 -2 12 7T19 6" stroke={T} strokeWidth="1.500" /></svg>
      </button>
      <div className="flex h-[31px] min-w-0 flex-1 bg-[#2a2a2a]">
        {Array.from({ length: 101 }, (_, i) => (
          <div key={i} className={`flex min-w-0 flex-1 flex-col items-center ${i === 0 ? "bg-[#8d7d22]" : ""}`}>
            <div className={`w-px shrink-0 ${i % 5 ? "h-[14px] bg-[#666]" : "h-4 bg-[#888]"}`} />
            {i % 5 === 0 && <span className={`leading-[15px] ${i === 0 ? "text-[#e6dc6a]" : "text-[#a8a8a8]"}`}>{i}</span>}
          </div>
        ))}
      </div>
    </div>
  </div>
)

/* ---------- command panel ---------- */

const Tick = ({ label, checked, disabled, className = "" }: { label: string; checked?: boolean; disabled?: boolean; className?: string }) => (
  <label className={`flex h-5 items-center gap-[3px] ${disabled ? "text-[#858585]" : ""} ${className}`}>
    <span className="relative flex size-[14px]">
      <input type="checkbox" defaultChecked={checked} disabled={disabled} className="peer size-[14px] appearance-none border border-[#454545] bg-[#666] disabled:bg-[#5a5a5a]" />
      <svg viewBox="0 0 14 14" className="pointer-events-none absolute inset-0 hidden size-[14px] peer-checked:block" fill="none"><path d="M3 6L6 10L11 3" stroke="#e0e0e0" strokeWidth="2" /></svg>
    </span>
    {label}
  </label>
)

const Choice = ({ label, name, checked, className = "" }: { label: string; name: string; checked?: boolean; className?: string }) => (
  <label className={`flex items-center gap-[7px] ${className}`}>
    <input type="radio" name={name} defaultChecked={checked} className="size-4 appearance-none rounded-full border border-[#464646] bg-[#636363] checked:border-4 checked:border-[#636363] checked:bg-[#e4e4e4]" />
    {label}
  </label>
)

const panelTabs: [string, ReactNode][] = [
  ["Create", <path d="M12 3V21M3 12H21" stroke="#999" strokeWidth="3" />],
  ["Modify", <g><path d="M3 3H21V21H3Z" stroke={T} strokeWidth="2" /><path d="M5 19Q8 8 19 5" stroke="#ddd" strokeWidth="2" /><path d="M1 1H5V5H1ZM19 1H23V5H19ZM1 19H5V23H1ZM19 19H23V23H19Z" fill="#333" stroke={T} strokeWidth="1.500" /></g>],
  ["Hierarchy", <g><path d="M4 2H20V9H4Z" fill="#999" /><path d="M12 9V13M5 18V13H19V18" stroke="#3a8c8c" strokeWidth="1.500" /><path d="M2 18H7V23H2ZM17 18H22V23H17Z" fill="#3a8c8c" /></g>],
  ["Motion", <g><circle cx="14" cy="12" r="9" fill="#999" /><path d="M7 4Q0 12 7 20M4 4Q-3 12 4 20" stroke="#3a8c8c" strokeWidth="1.500" /></g>],
  ["Display", <path d="M2 4H22V16H2ZM10 18H14V20H17V22H7V20H10Z" fill="#999" />],
  ["Utilities", <Wrench x={2} y={2} width={20} height={20} color="#999" strokeWidth={3} transform="scale(-1 1) translate(-24 0)" />],
]

const CommandPanel = () => (
  <aside className="flex w-[250px] shrink-0 flex-col border-l border-[#383838] text-[#f0f0f0]">
    <div className="flex h-[33px] gap-[2px]">
      {panelTabs.map(([label, icon], i) => (
        <button key={label} aria-label={label} className={`flex w-[38px] items-center justify-center rounded-t-md pt-[2px] ${i === 1 ? "border border-b-0 border-[#393939] bg-[#444]" : "bg-[#393939]"}`}>
          <svg viewBox="0 0 24 24" className="size-[22px]" fill="none" overflow="visible">{icon}</svg>
        </button>
      ))}
    </div>
    <div className="flex gap-[6px] border-t border-[#393939] px-[5px] pt-[10px]">
      <input aria-label="Object name" defaultValue="Line001" className="h-[23px] min-w-0 flex-1 border border-[#3a3a3a] bg-[#646464] px-[2px] text-[#dcdcdc] outline-none" />
      <button aria-label="Object color" className="h-[23px] w-[22px] border border-[#222] bg-[#5cc8d8]" />
    </div>
    <label className="relative mx-[5px] mt-[12px] mr-[3px] flex h-[24px] items-center border border-[#3a3a3a] bg-[#646464]">
      <select aria-label="Modifier List" className="w-full appearance-none pl-[2px] text-[#dcdcdc] outline-none"><option>Modifier List</option></select>
      <Arrow className="absolute right-[9px]" />
    </label>
    <ul className="mt-[3px] mr-[3px] ml-[5px] h-[128px] border-2 border-white bg-[#444] leading-[22px] outline outline-[#667]">
      <li className="flex h-[21px] border-b border-[#777] bg-[#5f8ac3]"><span className="flex w-6 items-center justify-center bg-[#444] pl-1"><EyeShape /></span><span className="pl-[25px]">Extrude</span></li>
      <li className="flex h-[21px] items-center border-b border-[#777]"><svg viewBox="0 0 6 8" className="ml-[8px] h-2 w-[6px]"><path d="M0 0L6 4L0 8Z" fill="#ddd" /></svg><span className="pl-[11px]">Line</span></li>
    </ul>
    <div className="flex h-[40px] items-center pl-[2px]">
      <button aria-label="Pin Stack" className="flex w-[33px] justify-center"><Pin size={22} fill={L} color={L} className="rotate-45" /></button>
      <WideSep />
      <button aria-label="Show end result" className="flex size-[28px] items-center justify-center rounded-md bg-[#5f8ac3]">
        <svg viewBox="0 0 24 24" className="ml-1 size-6"><path d="M6 1H18V4H16V23H8V4H6Z" fill="#ccc" stroke="#555" /><path d="M10 4H14V21H10Z" fill={T} stroke="#444" /></svg>
      </button>
      <WideSep />
      <button aria-label="Make unique" className="flex w-[34px] justify-center"><svg viewBox="0 0 24 24" className="size-6" fill="none" stroke="#2c2c2c" strokeWidth="2"><circle cx="6" cy="6" r="5" fill="#777" /><path d="M12 4H19V11M16 9L19 12L22 9" /><circle cx="12" cy="18" r="4.500" /><circle cx="18" cy="18" r="4.500" /></svg></button>
      <button aria-label="Remove modifier" className="flex w-[30px] justify-center"><svg viewBox="0 0 24 24" className="size-6"><path d="M9 1H15V3H21V6H3V3H9Z" fill={L} /><path d="M4 8H20V23H4Z" fill={L} /><path d="M8 10V21M12 10V21M16 10V21" stroke="#444" strokeWidth="2" /></svg></button>
      <WideSep />
      <button aria-label="Configure modifier sets" className="flex w-[32px] justify-center"><svg viewBox="0 0 24 24" className="size-6"><path d="M1 2H20V24H1Z" fill={L} /><path d="M4 9H9V14H4ZM12 9H17V14H12ZM4 17H9V22H4ZM12 17H17V22H12ZM3 5H18" stroke="#444" fill="none" strokeWidth="1.300" /><path d="M11 13L21 1L24 4L14 15L10 16Z" fill={O} stroke="#333" strokeWidth="0.700" /></svg></button>
    </div>
    <div className="mr-[10px] ml-[11px] flex h-[21px] items-center gap-[3px] pt-[3px]"><div className="h-px flex-1 bg-[#666]" /><div className="h-[3px] w-[13px] border-y border-dotted border-[#ccc]" /><div className="h-px flex-1 bg-[#666]" /></div>
    <div className="flex min-h-0 flex-1 pl-1">
      <section className="h-[381px] w-[231px] rounded-sm border border-[#3c3c3c] bg-[#525252]">
        <button className="flex h-[24px] w-full items-center px-[7px] font-bold"><Arrow /><span className="flex-1 pl-[7px] text-left">Parameters</span><span className="grid grid-cols-4 gap-px">{Array.from({ length: 16 }, (_, i) => <i key={i} className="size-px bg-[#888]" />)}</span></button>
        <div className="mt-[9px] flex h-[20px] items-center"><span className="w-[104px] pr-[5px] text-right">Amount:</span><Spin label="Amount" value="100,0cm" className="h-5 w-[92px]" /></div>
        <div className="mt-[5px] flex h-[20px] items-center"><span className="w-[104px] pr-[5px] text-right">Segments:</span><Spin label="Segments" value="1" className="h-5 w-[92px]" /></div>
        <fieldset className="mt-px mr-[13px] ml-[10px] h-[92px] rounded-sm border border-[#3a3a3a] pl-[61px]">
          <legend className="-ml-[56px] px-[2px] leading-[18px]">Capping</legend>
          <Tick label="Cap Start" checked className="mt-[3px]" />
          <Tick label="Cap End" checked className="mt-[2px]" />
          <div className="mt-[4px] -ml-[28px] flex gap-[28px]"><Choice name="cap" label="Morph" checked /><Choice name="cap" label="Grid" /></div>
        </fieldset>
        <fieldset className="mt-1 mr-[13px] ml-[10px] h-[89px] rounded-sm border border-[#3a3a3a] pl-[57px]">
          <legend className="-ml-[52px] px-[2px] leading-[18px]">Output</legend>
          <Choice name="out" label="Patch" className="h-[22px]" />
          <Choice name="out" label="Mesh" checked className="h-[22px]" />
          <Choice name="out" label="NURBS" className="h-[26px]" />
        </fieldset>
        <div className="pt-[5px] pl-4">
          <Tick label="Generate Mapping Coords." />
          <Tick label="Real-World Map Size" disabled />
          <Tick label="Generate Material IDs" checked />
          <Tick label="Use Shape IDs" className="pl-[22px]" />
          <Tick label="Smooth" checked />
        </div>
      </section>
      <div className="mb-1 ml-[3px] w-2 rounded-full bg-[#3c3c3c]" />
    </div>
  </aside>
)

/* ---------- status bar ---------- */

const Small = ({ label, flyout, children, className = "w-7" }: { label: string; flyout?: boolean; children: ReactNode; className?: string }) => (
  <button aria-label={label} className={`flex h-[26px] shrink-0 items-center justify-center ${className}`}>
    <svg viewBox="0 0 28 26" className="h-[26px] w-7" fill="none">{children}{flyout && <path d="M27 20V25H22Z" fill="#eee" />}</svg>
  </button>
)

const keyButton = "rounded-sm border border-[#3a3a3a] bg-[#5e5e5e]"

const StatusBar = () => (
  <footer className="flex h-[61px] shrink-0 bg-[#444] whitespace-nowrap text-[#f0f0f0]">
    <div className="flex w-[123px] shrink-0 flex-col gap-[2px] pt-[2px]">
      <div className="h-[27px] border-2 border-white border-t-[#888] border-l-[#888] bg-[#dcc3c3]" />
      <input aria-label="MAXScript listener" defaultValue="Welcome to MAXScript." className="h-[29px] border-2 border-white border-t-[#888] border-l-[#888] bg-white pr-1 pb-[6px] pl-1 font-['Liberation_Mono',monospace] text-[14px] text-black outline-none" />
    </div>
    <div className="ml-[5px] w-px bg-[#151515]" />
    <div className="flex flex-1 flex-col pl-1">
      <p className="pt-[8px] leading-[18px]">1 Object Selected</p>
      <p className="pt-[13px] leading-[18px]">Vertex snap on Line001 at [-20851,509cm, -66188,875cm, 100,0cm]</p>
    </div>
    <div className="flex flex-col">
      <div className="mt-1 flex h-[27px] items-center">
        <Small label="Isolate Selection" className="w-8"><path d="M5 8V4H9M19 4H23V8M23 18V22H19M9 22H5V18" stroke={L} strokeWidth="1.500" /><path d="M10 9H18V17H10Z" fill={T} /></Small>
        <Small label="Selection Lock" className="w-8"><path d="M8 12H20V22H8Z" fill={L} /><path d="M10 12V8Q10 4 14 4Q18 4 18 8V12" stroke={L} strokeWidth="1.800" /><path d="M14 15V19" stroke="#333" strokeWidth="2.500" /></Small>
        <Small label="Absolute Mode" className="w-9"><path d="M6 5H22V21H6Z" fill={L} /><path d="M8 11V7H12M16 7H20V11M20 15V19H16M12 19H8V15" stroke="#333" strokeWidth="1.500" /><circle cx="14" cy="13" r="3.500" stroke="#333" strokeWidth="2" /></Small>
        <span className="w-[18px]">X:</span><Spin label="X" value="14693,859cm" className="h-[22px] w-[85px]" />
        <span className="w-4 pl-[2px]">Y:</span><Spin label="Y" value="-44688,225cm" className="h-[22px] w-[85px]" />
        <span className="w-[18px] pl-[3px]">Z:</span><Spin label="Z" value="0,0cm" className="h-[22px] w-[85px]" />
        <span className="w-[131px] pl-[5px]">Grid = 1000,0cm</span>
      </div>
      <div className="mt-[4px] flex w-[155px] items-center self-end">
        <button aria-label="Time tag" className="mr-[7px] flex h-[26px] w-[27px] items-center justify-center rounded-sm border-l border-[#222] bg-[#5f8ac3]">
          <svg viewBox="0 0 18 18" className="size-[18px]" fill="none" stroke="#e0e0e0" strokeWidth="1.500"><path d="M9 1L16 5V13L9 17L2 13V5ZM2 5L9 9L16 5M9 9V17" /></svg>
        </button>
        <button className="text-[#d4d4d4]">Add Time Tag</button>
      </div>
    </div>
    <div className="flex gap-[5px] pt-1">
      <button aria-label="Set Keys" className={`flex h-[54px] w-[53px] items-center justify-center ${keyButton}`}>
        <svg viewBox="0 0 36 36" className="size-9" fill="none"><path d="M15 2V32M1 17H30" stroke={L} strokeWidth="6" /><circle cx="22" cy="29" r="4" stroke={T} strokeWidth="2.500" /><path d="M25 26L35 18M31 21L34 24M28 24L30 27" stroke={T} strokeWidth="2.500" /></svg>
      </button>
      <div className="flex w-[58px] flex-col gap-[2px]">
        <button className={`h-[26px] ${keyButton}`}>Auto</button>
        <button className={`h-[26px] ${keyButton}`}>Set K.</button>
      </div>
      <div className="flex w-[144px] flex-col gap-[4px]">
        <Dropdown label="Key selection" value="Selected" className="h-[24px] pl-1" />
        <div className="flex gap-[2px]">
          <Small label="Default tangents" flyout><path d="M4 24Q9 18 8 6M24 24Q19 18 20 6" stroke={T} strokeWidth="2" /><path d="M4 6H24" stroke={L} strokeWidth="1.500" /><circle cx="4" cy="6" r="2" fill={L} /><circle cx="24" cy="6" r="2" fill={L} /><rect x="11" y="3" width="6" height="6" fill="#333" stroke={L} strokeWidth="1.500" /></Small>
          <button className={`h-[26px] flex-1 ${keyButton}`}>Filters...</button>
        </div>
      </div>
    </div>
    <div className="flex w-[126px] shrink-0 flex-col pt-[3px] pl-[7px]">
      <div className="flex items-center">
        <Small label="Go to Start"><path d="M5 6V20" stroke={L} strokeWidth="2.500" /><path d="M15 7V19L8 13ZM23 7V19L16 13Z" fill={L} /></Small>
        <Sep />
        <Small label="Previous Frame"><path d="M13 7V19L5 13Z" fill={L} /><path d="M16 6V20M21 6V20" stroke={L} strokeWidth="3" /></Small>
        <Small label="Play" flyout><path d="M7 4L22 13L7 22Z" fill={L} /></Small>
        <Small label="Next Frame"><path d="M15 7V19L23 13Z" fill={L} /><path d="M7 6V20M12 6V20" stroke={L} strokeWidth="3" /></Small>
      </div>
      <div className="flex items-center">
        <Small label="Key Mode"><path d="M12 7V19L5 13ZM16 7V19L23 13Z" fill={L} /></Small>
        <Sep />
        <Spin label="Current frame" value="0" className="h-[23px] w-[83px]" />
      </div>
    </div>
    <div className="flex w-[28px] shrink-0 flex-col pt-[3px]">
      <Small label="Go to End"><path d="M20 6V20" stroke={L} strokeWidth="2.500" /><path d="M3 7V19L10 13ZM11 7V19L18 13Z" fill={L} /></Small>
      <Small label="Time Configuration"><circle cx="12" cy="11" r="8" fill={L} /><path d="M12 5V12H18" stroke="#444" strokeWidth="1.500" /><circle cx="19" cy="18" r="4" fill="#444" stroke={O} strokeWidth="3" /></Small>
    </div>
    <div className="mr-[5px] ml-2 grid w-[115px] shrink-0 grid-cols-4 content-start pt-[3px]">
      <Small label="Zoom"><Search x={5} y={3} width={20} height={20} color={L} strokeWidth={2.5} transform="scale(-1 1) translate(-28 0)" /></Small>
      <Small label="Zoom All"><path d="M13 3H18V8H13ZM19 3H24V8H19ZM13 9H18V14H13ZM19 9H24V14H19Z" fill={T} /><circle cx="13" cy="14" r="5" fill="#444" stroke={L} strokeWidth="2" /><path d="M10 18L5 23" stroke={L} strokeWidth="3" /></Small>
      <Small label="Zoom Extents" flyout><path d="M4 7V3H8M20 3H24V7M8 23H4V19" stroke={L} strokeWidth="1.500" /><path d="M14 4L21 8V17L14 21L7 17V8Z" fill={T} /><path d="M7 8L14 12L21 8M14 12V21" stroke="#444" /></Small>
      <Small label="Zoom Extents All" flyout><path d="M19 2L24 5V17L19 20L14 17V5Z" fill={T} /><path d="M14 5L19 8L24 5M19 8V20" stroke="#444" /><path d="M10 8L14 12L10 16L6 12ZM5 13L9 17L5 21L2 17ZM12 16L16 20L12 23L8 20Z" fill={L} /></Small>
      <Small label="Field of View" flyout><path d="M7 4L20 13L7 22" stroke={L} strokeWidth="2" /><path d="M13 8Q8 13 13 18" stroke={L} strokeWidth="2" /></Small>
      <Small label="Pan" flyout><Hand x={4} y={2} width={20} height={21} color={L} fill={L} strokeWidth={1.5} /></Small>
      <Small label="Orbit" flyout><circle cx="13" cy="12" r="8" fill={L} /><path d="M13 4V12H5Q6 4 13 4Z" fill={T} /><path d="M3 23Q9 22 24 4" stroke="#444" strokeWidth="4" /><path d="M3 22Q9 23 24 4" stroke={L} strokeWidth="1.800" /></Small>
      <Small label="Maximize Viewport"><path d="M6 4H22V21H6Z" fill={L} /><path d="M8 14H13V19H8Z" fill="#333" /><path d="M14 12L19 7M15 6H20V11" stroke="#333" strokeWidth="2" /></Small>
    </div>
  </footer>
)

/* ---------- taskbar ---------- */

const apps: [string, string, ReactNode][] = [
  ["Edge", "", <path d="M3 15Q4 2 16 2Q29 3 29 17V20H11Q12 27 20 27Q25 27 28 25V30Q24 32 18 32Q6 32 5 21Q5 15 11 11Q10 13 11 15H21Q21 8 16 8Q8 8 3 15Z" fill="#0a7bdc" />],
  ["Chrome", "w-[51px]", <g><circle cx="16" cy="16" r="14" fill="#f5c63c" /><path d="M16 16L4 9Q8 2 16 2Q24 2 28 9H16Z" fill="#dd4b3e" /><path d="M4 9Q-1 20 8 27Q12 30 15 30L21 20L16 16Z" fill="#1fa463" /><circle cx="16" cy="16" r="6.500" fill="#fff" /><circle cx="16" cy="16" r="5" fill="#4587f4" /></g>],
  ["Photoshop", "", <g><rect x="2" y="2" width="29" height="27" fill="#06192c" stroke="#00c3f5" strokeWidth="2" /><text x="8" y="21" fontSize="15" fontWeight="bold" fill="#00c3f5" fontFamily="Open Sans">Ps</text></g>],
  ["AutoCAD", "", <g><rect x="0" y="0" width="32" height="32" fill="#f3ece2" /><path d="M5 28L13 4H19L27 28H21L19 22H13L11 28ZM15 17H18L16 11Z" fill="#c0282d" /></g>],
  ["Mail", "", <g><path d="M1 12L16 3L31 12V28H1Z" fill="#fff" /><path d="M3 13H29L17 20L26 25Z" fill="#0b0b0b" /></g>],
  ["WinRAR", "", <g><path d="M3 5L7 3H29V10H3Z" fill="#b04f9a" /><path d="M3 12H29V18H3Z" fill="#2740b8" /><path d="M3 20H29V27H3Z" fill="#2f9b37" /><path d="M3 11H29M3 19H29" stroke="#ddd" strokeWidth="1.500" /><path d="M15 3H20V28H15Z" fill="#8b5a2b" /></g>],
  ["Photos", "w-[51px]", <g><path d="M4 4H28V28H4Z" fill="none" stroke="#fff" strokeWidth="2.500" /><path d="M4 28V20L13 9L19 19L22 14L28 21V28Z" fill="#fff" /></g>],
]

const Taskbar = () => (
  <div className="flex h-[50px] shrink-0 bg-linear-to-r from-[#050403] via-[#121213] via-60% to-[#030303] font-['Open_Sans',sans-serif] text-white">
    <button aria-label="Start" className="flex w-[60px] items-center justify-center"><svg viewBox="0 0 20 20" className="size-5" fill="#fff"><path d="M0 3L9 2V9.500H0ZM10 1.800L20 0V9.500H10ZM0 10.500H9V18L0 17ZM10 10.500H20V20L10 18.300Z" /></svg></button>
    <button aria-label="Search Windows" className="flex w-[60px] items-center justify-center"><Search size={22} strokeWidth={1.5} className="-scale-x-100" /></button>
    <button aria-label="Task View" className="flex w-[63px] items-center justify-center pr-[3px]"><svg viewBox="0 0 24 18" className="h-[18px] w-6" fill="none" stroke="#fff" strokeWidth="1.300"><path d="M5 1H19V17H5ZM3 3H1V15H3M21 3H23V15H21" /></svg></button>
    {apps.map(([name, bar, icon]) => (
      <button key={name} aria-label={name} className="relative flex w-[62px] items-center justify-center">
        <svg viewBox="0 0 32 32" className="size-[29px]">{icon}</svg>
        {bar && <span className={`absolute bottom-0 h-[3px] bg-[#76b9ed] ${bar}`} />}
      </button>
    ))}
    <button aria-label="3ds Max" className="relative flex w-[62px] items-center justify-center bg-[#333]">
      <span className="flex size-[30px] items-center justify-center bg-[#e4eef0]"><ThreeLogo className="size-7" /></span>
      <span className="absolute bottom-0 h-[3px] w-full bg-[#76b9ed]" />
    </button>
    <div className="ml-auto flex items-center gap-[9px] pr-[5px]">
      <svg viewBox="0 0 20 20" className="size-5" fill="none" stroke="#fff" strokeWidth="1.500"><path d="M2 14L10 6L18 14" /></svg>
      <svg viewBox="0 0 22 20" className="h-5 w-[22px]" fill="none" stroke="#fff" strokeWidth="1.300"><path d="M2 5H19V16H2ZM20 8V12" /><path d="M4 7H8V14H4Z" fill="#fff" /></svg>
      <svg viewBox="0 0 20 20" className="size-5" fill="none" stroke="#fff" strokeWidth="1.200"><path d="M3 18Q3 3 18 3M7 18Q7 7 18 7M11 18Q11 11 18 11" /><circle cx="16" cy="17" r="1.500" fill="#fff" /></svg>
      <svg viewBox="0 0 22 20" className="h-5 w-[22px]" fill="none" stroke="#fff" strokeWidth="1.200"><path d="M2 7H5L9 3V17L5 13H2ZM12 8Q14 10 12 12M15 5Q18 10 15 15M18 3Q23 10 18 17" /></svg>
      <div className="w-[74px] text-center text-[14px] leading-[23px]"><p>22:45</p><p>5.11.2017</p></div>
      <svg viewBox="0 0 22 22" className="mr-[14px] ml-3 size-[22px]" fill="none" stroke="#fff" strokeWidth="1.300"><path d="M1 2H20V17H13L10 20L7 17H1Z" /></svg>
      <div className="h-[50px] w-px bg-[#666]" />
    </div>
  </div>
)

const App = () => {
  return (
    <div className="flex h-screen flex-col overflow-hidden bg-[#444] font-['DejaVu_Sans_Condensed','DejaVu_Sans',sans-serif] text-[13px]">
      <header className="relative shrink-0 font-['Open_Sans',sans-serif]">
        <TitleBar />
        <MenuBar />
        <button aria-label="Application menu" className="absolute top-1 left-1 flex h-[42px] w-[41px] flex-col items-center border border-[#222] bg-linear-to-b from-[#b8b8b8] to-[#7c7c7c]">
          <span className="flex items-center"><ThreeLogo className="size-7" /><Arrow className="h-1 w-[6px] text-[#333]" /></span>
          <span className="text-[9px] leading-[9px] font-bold text-black">MAX</span>
        </button>
      </header>
      <div className="shrink-0">
        <MainToolbar />
        <div className="font-['Open_Sans',sans-serif]"><Ribbon /></div>
        <ShortcutBar />
      </div>
      <main className="flex min-h-0 flex-1">
        <div className="flex w-[48px] shrink-0 flex-col bg-[#333]">
          <div className="h-[10px] bg-[#444] pt-1"><div className="mx-[2px] h-px bg-[#111]" /></div>
          <button aria-label="Play" className="mt-auto ml-[11px] flex size-[25px] items-center justify-center rounded-sm border border-[#222] bg-[#505050]"><svg viewBox="0 0 6 10" className="h-[10px] w-[6px]"><path d="M0 0L6 5L0 10Z" fill="#eee" /></svg></button>
          <button aria-label="Viewport layout" className="mt-[13px] mb-1 ml-1 flex h-[54px] items-center justify-center rounded-l-sm bg-linear-to-b from-[#4d617c] to-[#3f7dd0]"><span className="h-[34px] w-[38px] border-2 border-[#2e3540] bg-linear-to-b from-[#67707c] to-[#5c6f8a]" /></button>
        </div>
        <SceneExplorer />
        <div className="ml-[3px] flex min-w-0 flex-1 flex-col">
          <Viewport />
          <Timeline />
        </div>
        <div className="w-[5px]" />
        <CommandPanel />
      </main>
      <StatusBar />
      <Taskbar />
    </div>
  )
}

export default App
